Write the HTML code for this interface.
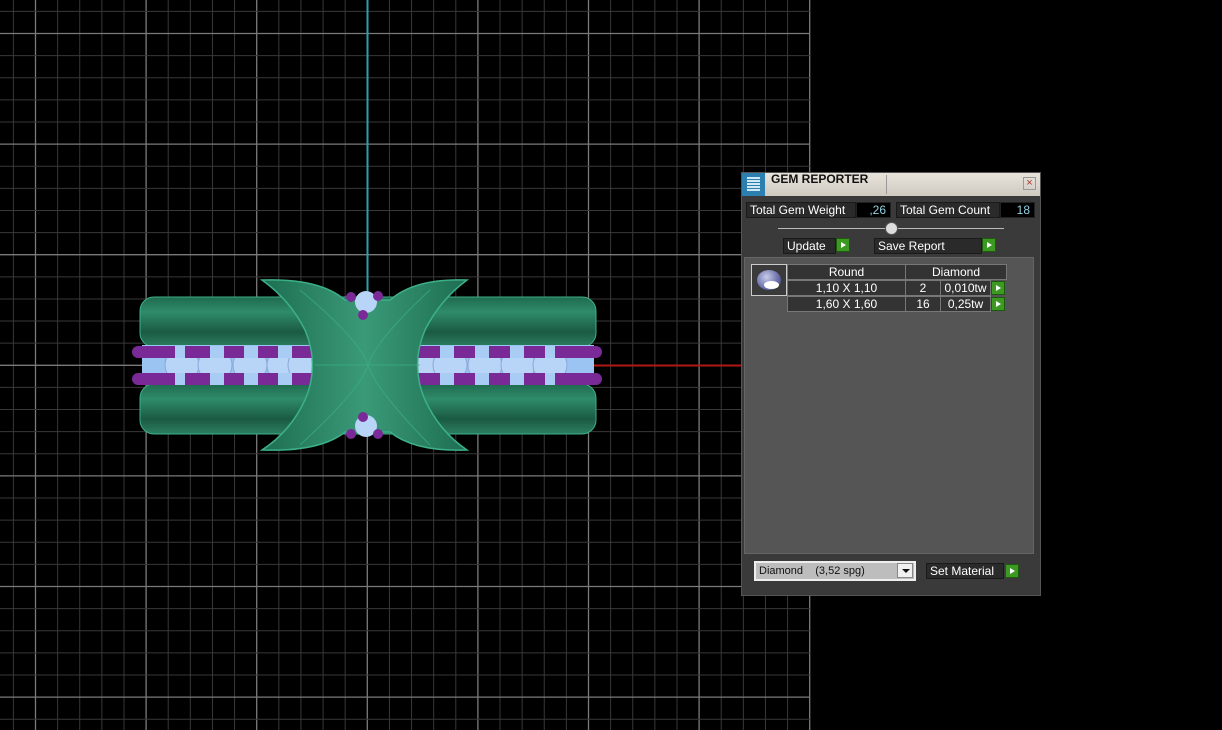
<!DOCTYPE html>
<html><head><meta charset="utf-8"><style>
body{margin:0;width:1222px;height:730px;background:#000;overflow:hidden;position:relative;font-family:"Liberation Sans",sans-serif}
.p{position:absolute}
.box{position:absolute;border:1px solid #1a1a1a;background:#2a2a2a;color:#fff;font-size:12px;line-height:15px;padding-left:3px;box-sizing:border-box}
.val{position:absolute;background:#000;color:#8fd0e0;font-size:12px;line-height:15px;text-align:right;padding-right:4px;box-sizing:border-box;border:1px solid #222}
.gb{position:absolute;width:14px;height:14px;background:#3c9a22;border:1px solid #1d5a10;box-sizing:border-box}
.gb:after{content:"";position:absolute;left:4px;top:3px;border-left:5px solid #fff;border-top:3px solid transparent;border-bottom:3px solid transparent}
.cell{position:absolute;background:#333;border:1px solid #777;box-sizing:border-box;color:#fff;font-size:12px;line-height:14px;text-align:center}
</style></head><body>
<svg class="p" style="left:0;top:0" width="811" height="730" id="grid"></svg>
<script>
(function(){var s=document.getElementById('grid'),h='';
for(var i=-4;i<40;i++){var x=35.5+i*22.12;if(x<0||x>810)continue;var maj=(i%5==0);
h+='<line x1="'+x+'" y1="0" x2="'+x+'" y2="730" stroke="'+(maj?'#7a7a7a':'#383838')+'" stroke-width="'+(maj?1.3:1)+'"/>';}
for(var j=-4;j<40;j++){var y=33.5+j*22.12;if(y<0||y>730)continue;var maj=(j%5==0);
h+='<line x1="0" y1="'+y+'" x2="810" y2="'+y+'" stroke="'+(maj?'#7a7a7a':'#383838')+'" stroke-width="'+(maj?1.3:1)+'"/>';}
h+='<line x1="367.5" y1="0" x2="367.5" y2="300" stroke="#2aa0a8" stroke-width="2"/>';
h+='<line x1="590" y1="365.5" x2="741" y2="365.5" stroke="#b01818" stroke-width="2"/>';
s.innerHTML=h;})();
</script>
<svg class="p" style="left:0;top:0" width="811" height="730">
<defs>
<linearGradient id="tube" x1="0" y1="0" x2="0" y2="1">
<stop offset="0" stop-color="#1f6a50"/><stop offset=".3" stop-color="#2f8c6a"/><stop offset=".7" stop-color="#1a5a43"/><stop offset="1" stop-color="#2c7f60"/></linearGradient>
<linearGradient id="cx" x1="0" y1="0" x2="1" y2="0">
<stop offset="0" stop-color="#1e6e52"/><stop offset=".5" stop-color="#3a9a78"/><stop offset="1" stop-color="#1e6e52"/></linearGradient>
</defs>
<rect x="140" y="297" width="456" height="50" rx="14" fill="url(#tube)" stroke="#3cb088"/>
<rect x="140" y="384" width="456" height="50" rx="14" fill="url(#tube)" stroke="#3cb088"/>
<rect x="142" y="345" width="452" height="40" fill="#9cc4f2"/>
<g fill="#b8d4f6" stroke="#8aa8d8">
<circle cx="182" cy="365" r="17"/><circle cx="215" cy="365" r="17"/><circle cx="250" cy="365" r="17"/><circle cx="284" cy="365" r="17"/><circle cx="305" cy="365" r="17"/>
<circle cx="428" cy="365" r="17"/><circle cx="450" cy="365" r="17"/><circle cx="485" cy="365" r="17"/><circle cx="518" cy="365" r="17"/><circle cx="550" cy="365" r="17"/>
</g>
<g fill="#7a2a96">
<rect x="132" y="346" width="470" height="12" rx="6"/>
<rect x="132" y="373" width="470" height="12" rx="6"/>
</g>
<g fill="#a8ccf4">
<rect x="175" y="346" width="10" height="12"/><rect x="210" y="346" width="14" height="12"/><rect x="244" y="346" width="14" height="12"/><rect x="278" y="346" width="14" height="12"/>
<rect x="175" y="373" width="10" height="12"/><rect x="210" y="373" width="14" height="12"/><rect x="244" y="373" width="14" height="12"/><rect x="278" y="373" width="14" height="12"/>
<rect x="440" y="346" width="14" height="12"/><rect x="475" y="346" width="14" height="12"/><rect x="510" y="346" width="14" height="12"/><rect x="545" y="346" width="10" height="12"/>
<rect x="440" y="373" width="14" height="12"/><rect x="475" y="373" width="14" height="12"/><rect x="510" y="373" width="14" height="12"/><rect x="545" y="373" width="10" height="12"/>
</g>
<path d="M262 280 Q320 278 345 300 L390 300 Q415 278 467 280 Q440 300 425 330 Q410 365 425 400 Q440 432 467 450 Q415 452 390 432 L345 432 Q320 452 262 450 Q290 432 305 400 Q320 365 305 330 Q290 300 262 280Z" fill="url(#cx)" stroke="#3cb088" stroke-width="1.5"/>
<g stroke="#3cb088" fill="none" opacity=".7"><path d="M300 290 Q360 340 368 365 Q376 390 430 445"/><path d="M430 290 Q376 340 368 365 Q360 390 300 445"/><line x1="315" y1="365" x2="420" y2="365"/></g>
<circle cx="366" cy="302" r="11" fill="#b8d4f6"/><circle cx="366" cy="426" r="11" fill="#b8d4f6"/>
<g fill="#7a2a96"><circle cx="351" cy="297" r="5"/><circle cx="378" cy="296" r="5"/><circle cx="363" cy="315" r="5"/>
<circle cx="363" cy="417" r="5"/><circle cx="351" cy="434" r="5"/><circle cx="378" cy="434" r="5"/></g>
</svg>

<div class="p" style="left:741px;top:172px;width:300px;height:424px;background:#3a3a3a;border:1px solid #555;box-sizing:border-box"></div>
<div class="p" style="left:742px;top:173px;width:298px;height:23px;background:linear-gradient(#e8e4dc,#cfcac0)"></div>
<div class="p" style="left:742px;top:173px;width:23px;height:23px;background:#2d7fb0"><div style="position:absolute;left:5px;top:4px;width:13px;height:15px;background:repeating-linear-gradient(#cfe6f6 0 2px,#2d7fb0 2px 3px)"></div></div>
<div class="p" style="left:771px;top:172px;font-size:12px;font-weight:bold;color:#111">GEM REPORTER</div>
<div class="p" style="left:886px;top:175px;width:1px;height:19px;background:#999"></div>
<div class="p" style="left:1023px;top:177px;width:13px;height:13px;border:1px solid #999;box-sizing:border-box;color:#b03030;font-size:11px;line-height:11px;text-align:center">×</div>

<div class="box" style="left:746px;top:202px;width:110px;height:16px">Total Gem Weight</div>
<div class="val" style="left:856px;top:202px;width:35px;height:16px">,26</div>
<div class="box" style="left:896px;top:202px;width:104px;height:16px">Total Gem Count</div>
<div class="val" style="left:1000px;top:202px;width:35px;height:16px">18</div>
<div class="p" style="left:778px;top:228px;width:226px;height:1px;background:#bbb"></div>
<div class="p" style="left:885px;top:222px;width:11px;height:11px;border-radius:50%;background:#ddd;border:1px solid #555"></div>

<div class="box" style="left:783px;top:238px;width:53px;height:16px">Update</div>
<div class="gb" style="left:836px;top:238px"></div>
<div class="box" style="left:874px;top:238px;width:108px;height:16px">Save Report</div>
<div class="gb" style="left:982px;top:238px"></div>

<div class="p" style="left:744px;top:257px;width:290px;height:297px;background:#555;border:1px solid #666;box-sizing:border-box"></div>
<div class="p" style="left:751px;top:264px;width:36px;height:32px;border:1px solid #ccc;box-sizing:border-box;background:#3a3a3a"><div style="position:absolute;left:5px;top:5px;width:24px;height:20px;border-radius:50%;background:radial-gradient(circle at 40% 35%,#c8cce8,#5a5fa0 70%)"></div><div style="position:absolute;left:12px;top:16px;width:15px;height:8px;border-radius:50%;background:#fff"></div></div>
<div class="cell" style="left:787px;top:264px;width:119px;height:16px">Round</div>
<div class="cell" style="left:905px;top:264px;width:102px;height:16px">Diamond</div>
<div class="cell" style="left:787px;top:280px;width:119px;height:16px">1,10 X 1,10</div>
<div class="cell" style="left:905px;top:280px;width:36px;height:16px">2</div>
<div class="cell" style="left:940px;top:280px;width:51px;height:16px">0,010tw</div>
<div class="gb" style="left:991px;top:281px"></div>
<div class="cell" style="left:787px;top:296px;width:119px;height:16px">1,60 X 1,60</div>
<div class="cell" style="left:905px;top:296px;width:36px;height:16px">16</div>
<div class="cell" style="left:940px;top:296px;width:51px;height:16px">0,25tw</div>
<div class="gb" style="left:991px;top:297px"></div>

<div class="p" style="left:754px;top:561px;width:162px;height:20px;background:#bdbdbd;border:2px solid #eee;box-sizing:border-box;font-size:11px;line-height:16px;color:#111;padding-left:3px">Diamond&nbsp;&nbsp;&nbsp;&nbsp;(3,52 spg)</div>
<div class="p" style="left:897px;top:563px;width:16px;height:15px;background:#f0f0f0;border:1px solid #888;box-sizing:border-box"><div style="position:absolute;left:4px;top:5px;border-top:4px solid #111;border-left:4px solid transparent;border-right:4px solid transparent"></div></div>
<div class="box" style="left:926px;top:563px;width:78px;height:16px;font-size:12px">Set Material</div>
<div class="gb" style="left:1005px;top:564px"></div>
</body></html>
